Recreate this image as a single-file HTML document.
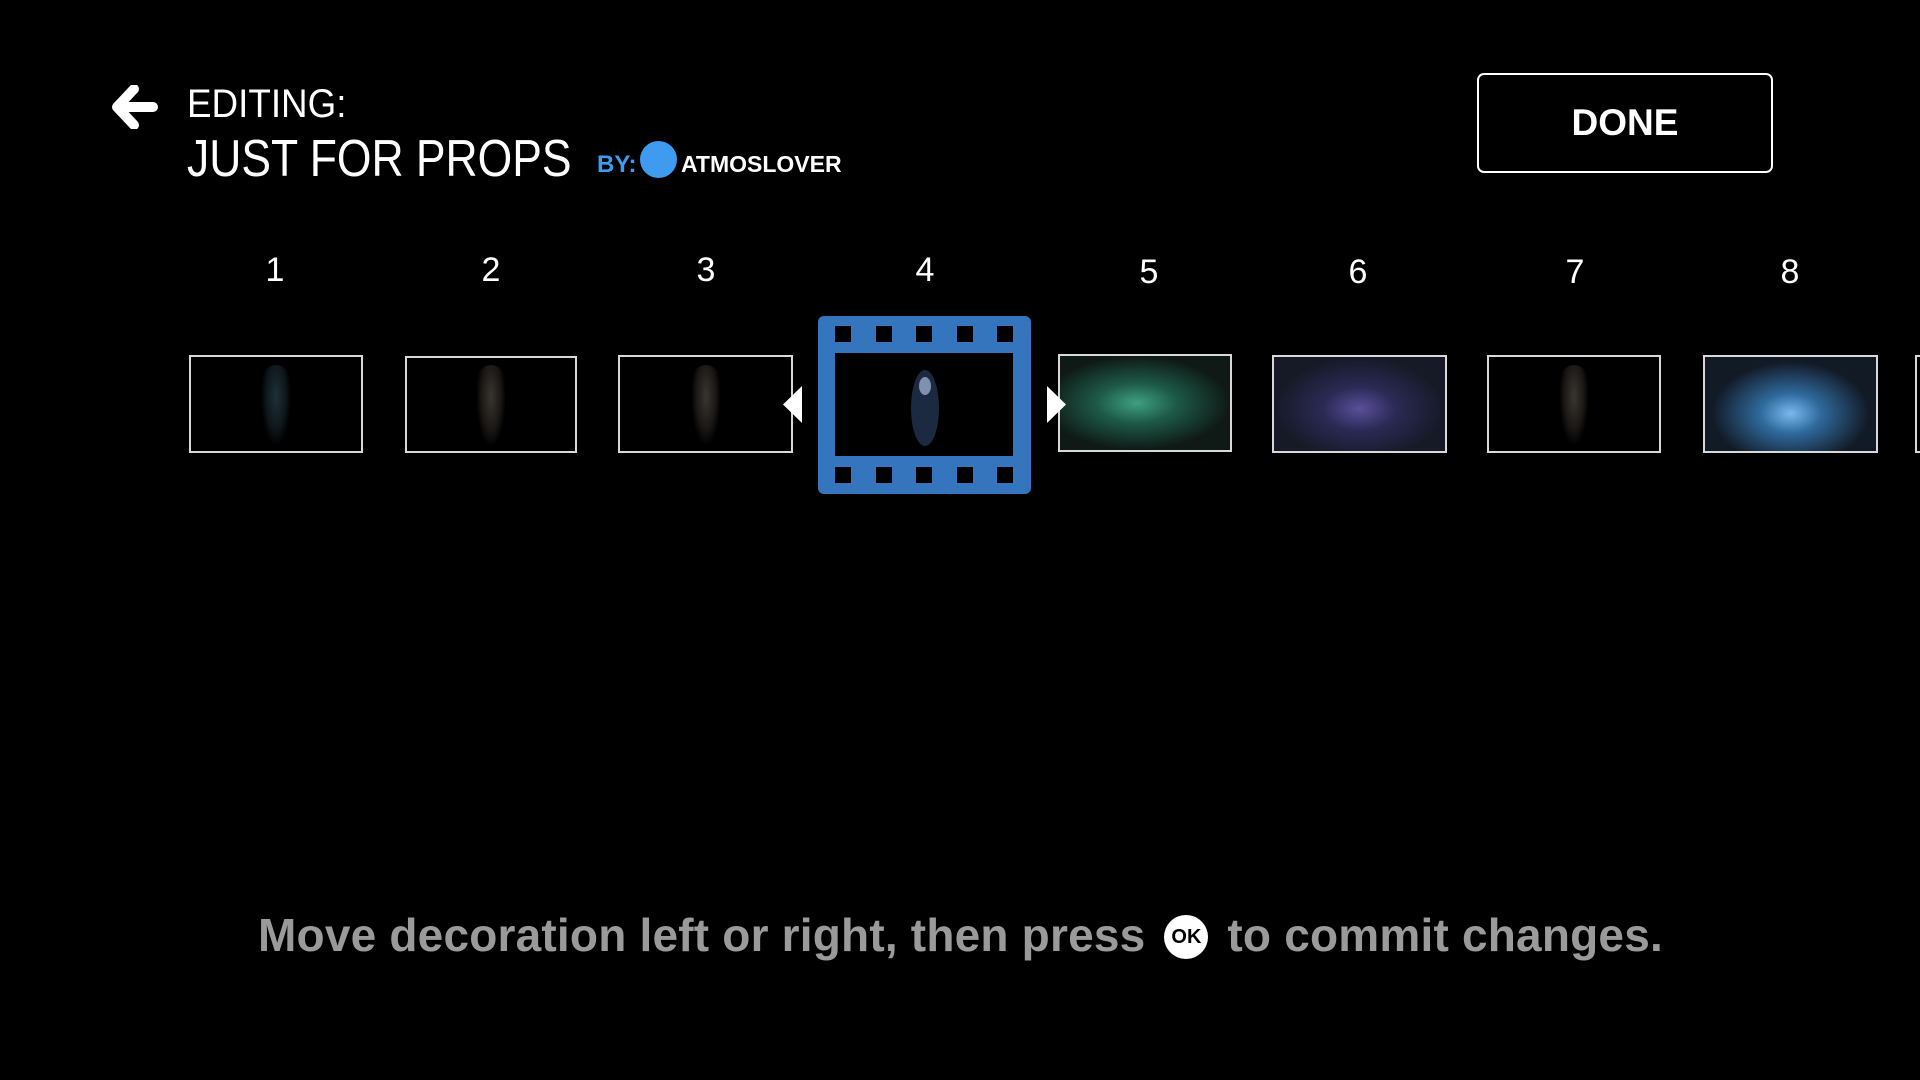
<!DOCTYPE html>
<html><head><meta charset="utf-8"><style>
*{margin:0;padding:0;box-sizing:border-box}
body{width:1920px;height:1080px;background:#000;position:relative;overflow:hidden;font-family:"Liberation Sans",sans-serif;color:#fff}
.a{position:absolute}
.th{position:absolute;border:2px solid #d8d8d8;background:#000;overflow:hidden}
.num{position:absolute;font-size:34px;width:80px;text-align:center;margin-left:-40px}
.fig{position:absolute;left:50%;top:8%;width:28px;height:84%;margin-left:-14px;border-radius:14px 14px 6px 6px;background:radial-gradient(ellipse at 50% 40%,#3a3530 0%,#1a1714 50%,transparent 75%)}
</style></head><body>
<svg class="a" style="left:112px;top:85px" width="46" height="44" viewBox="0 0 46 44"><path d="M22 4 L5 22 L22 40 M7 22 H41" stroke="#fff" stroke-width="10" stroke-linecap="round" stroke-linejoin="round" fill="none"/></svg>
<div class="a" style="left:187px;top:82px;font-size:40px;transform:scaleX(0.92);transform-origin:0 0">EDITING:</div>
<div class="a" style="left:187px;top:129px;font-size:52px;transform:scaleX(0.855);transform-origin:0 0;white-space:nowrap">JUST FOR PROPS</div>
<div class="a" style="left:597px;top:151px;font-size:24px;font-weight:bold;color:#3f9bf0">BY:</div>
<div class="a" style="left:640px;top:141px;width:37px;height:37px;border-radius:50%;background:#3f9bf0"></div>
<div class="a" style="left:681px;top:151px;font-size:23px;font-weight:bold">ATMOSLOVER</div>
<div class="a" style="left:1477px;top:73px;width:296px;height:100px;border:2px solid #fff;border-radius:7px;font-size:37px;font-weight:bold;text-align:center;line-height:96px">DONE</div>

<div class="num" style="left:275px;top:251px">1</div>
<div class="num" style="left:491px;top:251px">2</div>
<div class="num" style="left:706px;top:251px">3</div>
<div class="num" style="left:925px;top:251px">4</div>
<div class="num" style="left:1149px;top:253px">5</div>
<div class="num" style="left:1358px;top:253px">6</div>
<div class="num" style="left:1575px;top:253px">7</div>
<div class="num" style="left:1790px;top:253px">8</div>

<div class="th" style="left:189px;top:355px;width:174px;height:98px"><div class="fig" style="background:radial-gradient(ellipse at 50% 40%,#1e3038 0%,#0e171b 50%,transparent 75%)"></div></div>
<div class="th" style="left:405px;top:356px;width:172px;height:97px"><div class="fig"></div></div>
<div class="th" style="left:618px;top:355px;width:175px;height:98px"><div class="fig"></div></div>
<div class="th" style="left:1058px;top:354px;width:174px;height:98px;background:radial-gradient(ellipse at 45% 50%,#3fa080 0%,#1d5a48 30%,#0f1a16 70%)"></div>
<div class="th" style="left:1272px;top:355px;width:175px;height:98px;background:radial-gradient(ellipse at 50% 55%,#5a4f9a 0%,#2b2a55 30%,#151a26 70%)"></div>
<div class="th" style="left:1487px;top:355px;width:174px;height:98px"><div class="fig"></div></div>
<div class="th" style="left:1703px;top:355px;width:175px;height:98px;background:radial-gradient(ellipse at 50% 60%,#7ab8ee 0%,#2f6a9c 25%,#121a26 65%)"></div>
<div class="th" style="left:1915px;top:355px;width:20px;height:98px"></div>

<svg class="a" style="left:783px;top:386px" width="20" height="37"><path d="M19 0 V37 L0 18.5Z" fill="#fff"/></svg>
<svg class="a" style="left:1047px;top:386px" width="20" height="37"><path d="M0 0 V37 L19 18.5Z" fill="#fff"/></svg>

<svg class="a" style="left:818px;top:316px" width="213" height="178" viewBox="0 0 213 178">
<path fill="#3575bd" fill-rule="evenodd" d="M6 0H207A6 6 0 0 1 213 6V172A6 6 0 0 1 207 178H6A6 6 0 0 1 0 172V6A6 6 0 0 1 6 0Z
M17 10h16v16h-16z M58 10h16v16h-16z M98 10h16v16h-16z M139 10h16v16h-16z M179 10h16v16h-16z
M17 151h16v16h-16z M58 151h16v16h-16z M98 151h16v16h-16z M139 151h16v16h-16z M179 151h16v16h-16z
M17 37h178v103h-178z"/>
<ellipse cx="107" cy="92" rx="14" ry="38" fill="#1b2a40"/>
<ellipse cx="107" cy="70" rx="6" ry="9" fill="#8090b0"/>
</svg>

<div class="a" style="left:258px;top:908px;font-size:46px;font-weight:bold;color:#9a9a9a;white-space:nowrap;letter-spacing:0.2px">Move decoration left or right, then press <span style="display:inline-block;width:44px;height:44px;border-radius:50%;background:#fff;color:#000;font-size:20px;letter-spacing:0;text-align:center;line-height:44px;vertical-align:8px;margin:0 6px">OK</span> to commit changes.</div>
</body></html>
